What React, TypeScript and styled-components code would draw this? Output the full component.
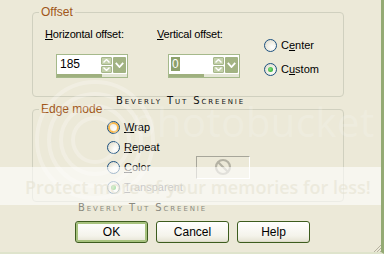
import React from "react";
import styled, { createGlobalStyle } from "styled-components";

const GlobalStyle = createGlobalStyle`
	html, body {
		margin: 0;
		padding: 0;
		background: #ece9d8;
	}
	* {
		box-sizing: border-box;
	}
`;

const Dialog = styled.div`
	position: relative;
	width: 384px;
	height: 254px;
	overflow: hidden;
	background: #ece9d8;
	border-right: 3px solid #94aa74;
	border-bottom: 2px solid #dfe4cc;
	padding: 12px 37px 0 32px;
	font-family: "Liberation Sans", Arial, sans-serif;
	font-size: 11px;
	color: #000;
`;

const Group = styled.div<{ $height: number; $top?: number }>`
	position: relative;
	height: ${(p) => p.$height}px;
	margin-top: ${(p) => p.$top ?? 0}px;
	border: 1px solid #d0d0bf;
	border-radius: 4px;
`;

const Legend = styled.span`
	position: absolute;
	top: -8px;
	left: 6px;
	padding: 0 2px;
	background: #ece9d8;
	color: #a0561a;
	font-size: 12px;
	line-height: 14px;
`;

const OffsetBody = styled.div`
	display: flex;
	padding: 15px 0 0 12px;
`;

const Field = styled.div<{ $width: number }>`
	width: ${(p) => p.$width}px;
	display: flex;
	flex-direction: column;
`;

const Label = styled.div`
	line-height: 13px;
	white-space: nowrap;
	letter-spacing: -0.2px;
`;

const SpinBox = styled.div`
	position: relative;
	margin: 13px 0 0 11px;
	width: 72px;
	height: 24px;
	border: 1px solid #a5b98b;
	background: #fff;
	display: flex;
	padding: 2px 1px 4px 1px;
`;

const SpinText = styled.div<{ $selected?: boolean }>`
	flex: 1;
	line-height: 15px;
	font-size: 12px;
	padding-left: 1px;
	span {
		background: ${(p) => (p.$selected ? "#8da16c" : "transparent")};
		color: ${(p) => (p.$selected ? "#fff" : "#000")};
		padding: 0 1px;
	}
`;

const Arrows = styled.div`
	display: flex;
	flex-direction: column;
	gap: 1px;
	width: 11px;
	margin-right: 1px;
`;

const ArrowBtn = styled.div`
	flex: 1;
	background: #c3d0aa;
	border: 1px solid #a6b78a;
	border-radius: 1px;
	display: flex;
	align-items: center;
	justify-content: center;
`;

const DropBtn = styled.div`
	width: 13px;
	background: #a2b383;
	border-radius: 1px;
	display: flex;
	align-items: center;
	justify-content: center;
`;

const Track = styled.div`
	position: absolute;
	left: 0;
	right: 0;
	bottom: 0;
	height: 3px;
	background: #e4e6d6;
`;

const TrackFill = styled.div`
	height: 100%;
	background: #9fb07e;
`;

const RadioColumn = styled.div<{ $top: number; $gap: number }>`
	display: flex;
	flex-direction: column;
	gap: ${(p) => p.$gap}px;
	margin-top: ${(p) => p.$top}px;
`;

const RadioRow = styled.div<{ $dim?: boolean }>`
	display: flex;
	align-items: center;
	gap: 4px;
	height: 20px;
	line-height: 13px;
	color: ${(p) => (p.$dim ? "#777" : "#000")};
`;

const Circle = styled.span<{ $hover?: boolean }>`
	position: relative;
	width: 13px;
	height: 13px;
	border-radius: 50%;
	border: 1px solid #1c5180;
	background: radial-gradient(circle at 65% 65%, #ffffff 0%, #f1efe5 45%, #d7d3c4 100%);
	box-shadow: ${(p) => (p.$hover ? "inset 0 0 0 2px #f9b84a" : "none")};
	flex: none;
`;

const Dot = styled.span`
	position: absolute;
	left: 3px;
	top: 3px;
	width: 5px;
	height: 5px;
	border-radius: 50%;
	background: radial-gradient(circle at 40% 40%, #7fe07f, #21a121);
`;

const EdgeBody = styled.div`
	padding: 7px 0 0 74px;
`;

const ColorRow = styled.div`
	display: flex;
	align-items: center;
	width: 143px;
	height: 20px;
	justify-content: space-between;
`;

const Swatch = styled.div`
	width: 54px;
	height: 23px;
	border: 1px solid;
	border-color: #a7a69a #ffffff #ffffff #a7a69a;
	display: flex;
	align-items: center;
	justify-content: center;
`;

const ButtonRow = styled.div`
	display: flex;
	gap: 8px;
	margin: 19px 0 0 43px;
`;

const Button = styled.div<{ $default?: boolean }>`
	width: 73px;
	height: 22px;
	border: 1px solid #3d5c1e;
	border-radius: 3px;
	background: linear-gradient(#ffffff, #f4f3ea 70%, #e4e2d2);
	box-shadow: ${(p) => (p.$default ? "inset 0 0 0 2px #a7c27e" : "inset 0 -1px 0 #dcdac8")};
	display: flex;
	align-items: center;
	justify-content: center;
	font-size: 12px;
`;

const Stamp = styled.div<{ $top: number; $left: number; $color: string }>`
	position: absolute;
	top: ${(p) => p.$top}px;
	left: ${(p) => p.$left}px;
	font-family: "DejaVu Sans", sans-serif;
	font-size: 10px;
	font-variant: small-caps;
	letter-spacing: 1.9px;
	color: ${(p) => p.$color};
	white-space: nowrap;
	line-height: 10px;
`;

const Band = styled.div`
	position: absolute;
	left: 0;
	right: 0;
	top: 167px;
	height: 38px;
	background: rgba(255, 255, 255, 0.6);
	font-family: "Open Sans", sans-serif;
	font-size: 18px;
	font-weight: 600;
	line-height: 40px;
	padding-left: 25px;
	color: rgba(228, 224, 206, 0.55);
	white-space: nowrap;
	pointer-events: none;
`;

const Brand = styled.div`
	position: absolute;
	left: 132px;
	top: 94px;
	font-family: "Open Sans", sans-serif;
	font-size: 40px;
	color: rgba(255, 255, 255, 0.18);
	letter-spacing: 0.5px;
	white-space: nowrap;
	pointer-events: none;
`;

const Rings = styled.svg`
	position: absolute;
	left: 20px;
	top: 65px;
	pointer-events: none;
`;

const Grip = styled.svg`
	position: absolute;
	right: 0;
	bottom: 0;
`;

const Up = () => (
	<svg width="7" height="4" viewBox="0 0 7 4">
		<path d="M0.5 3.5 L3.5 0.5 L6.5 3.5" fill="none" stroke="#fff" strokeWidth="1.4" />
	</svg>
);

const Down = () => (
	<svg width="7" height="4" viewBox="0 0 7 4">
		<path d="M0.5 0.5 L3.5 3.5 L6.5 0.5" fill="none" stroke="#fff" strokeWidth="1.4" />
	</svg>
);

const Spin = ({ value, fill, selected }: { value: string; fill: number; selected?: boolean }) => (
	<SpinBox>
		<SpinText $selected={selected}>
			<span>{value}</span>
		</SpinText>
		<Arrows>
			<ArrowBtn>
				<Up />
			</ArrowBtn>
			<ArrowBtn>
				<Down />
			</ArrowBtn>
		</Arrows>
		<DropBtn>
			<svg width="9" height="6" viewBox="0 0 9 6">
				<path d="M0.8 0.8 L4.5 5 L8.2 0.8" fill="none" stroke="#fff" strokeWidth="1.8" />
			</svg>
		</DropBtn>
		<Track>
			<TrackFill style={{ width: `${fill}%` }} />
		</Track>
	</SpinBox>
);

const Radio = ({
	children,
	checked,
	hover,
	dim,
}: {
	children: React.ReactNode;
	checked?: boolean;
	hover?: boolean;
	dim?: boolean;
}) => (
	<RadioRow $dim={dim}>
		<Circle $hover={hover}>{checked && <Dot />}</Circle>
		<span>{children}</span>
	</RadioRow>
);

export default function App() {
	return (
		<>
			<GlobalStyle />
			<Dialog>
				<Group $height={85}>
					<Legend>Offset</Legend>
					<OffsetBody>
						<Field $width={112}>
							<Label>
								<u>H</u>orizontal offset:
							</Label>
							<Spin value="185" fill={64} />
						</Field>
						<Field $width={107}>
							<Label>
								<u>V</u>ertical offset:
							</Label>
							<Spin value="0" fill={50} selected />
						</Field>
						<RadioColumn $top={7} $gap={4}>
							<Radio>
								C<u>e</u>nter
							</Radio>
							<Radio checked>
								C<u>u</u>stom
							</Radio>
						</RadioColumn>
					</OffsetBody>
				</Group>

				<Group $height={93} $top={12}>
					<Legend>Edge mode</Legend>
					<EdgeBody>
						<Radio hover>
							<u>W</u>rap
						</Radio>
						<Radio>
							<u>R</u>epeat
						</Radio>
						<ColorRow>
							<Radio>
								<u>C</u>olor
							</Radio>
							<Swatch>
								<svg width="18" height="18" viewBox="0 0 18 18">
									<circle cx="9" cy="9" r="7" fill="none" stroke="#b4b2a4" strokeWidth="2.2" />
									<path d="M4.2 4.2 L13.8 13.8" stroke="#b4b2a4" strokeWidth="2.2" />
								</svg>
							</Swatch>
						</ColorRow>
						<Radio checked dim>
							<u>T</u>ransparent
						</Radio>
					</EdgeBody>
				</Group>

				<ButtonRow>
					<Button $default>OK</Button>
					<Button>Cancel</Button>
					<Button>Help</Button>
				</ButtonRow>

				<Rings width="150" height="150" viewBox="0 0 150 150">
					{[22, 34, 46, 58].map((r) => (
						<circle key={r} cx="75" cy="75" r={r} fill="none" stroke="rgba(255,255,255,0.25)" strokeWidth="4" />
					))}
				</Rings>
				<Brand>photobucket</Brand>
				<Band>Protect more of your memories for less!</Band>
				<Stamp $top={96} $left={116} $color="#111">
					Beverly Tut Screenie
				</Stamp>
				<Stamp $top={203} $left={78} $color="#8a8a80">
					Beverly Tut Screenie
				</Stamp>
				<Grip width="9" height="9" viewBox="0 0 9 9">
					{[2, 5, 8].map((o) => (
						<path key={o} d={`M${o} 9 L9 ${o}`} stroke="#b6b2a0" strokeWidth="1" />
					))}
				</Grip>
			</Dialog>
		</>
	);
}
